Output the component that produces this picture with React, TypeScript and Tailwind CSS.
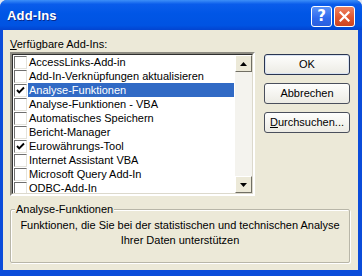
import React from "react";

const items = [
  { label: "AccessLinks-Add-in", checked: false },
  { label: "Add-In-Verknüpfungen aktualisieren", checked: false },
  { label: "Analyse-Funktionen", checked: true, selected: true },
  { label: "Analyse-Funktionen - VBA", checked: false },
  { label: "Automatisches Speichern", checked: false },
  { label: "Bericht-Manager", checked: false },
  { label: "Eurowährungs-Tool", checked: true },
  { label: "Internet Assistant VBA", checked: false },
  { label: "Microsoft Query Add-In", checked: false },
  { label: "ODBC-Add-In", checked: false },
];

function CheckBox({ checked }: { checked: boolean }) {
  return (
    <div className="w-[13px] h-[13px] shrink-0 bg-white border-t border-l border-[#6f6f6f] border-r-[#e4e3dc] border-b-[#e4e3dc] border-r border-b flex items-center justify-center">
      {checked && (
        <svg width="9" height="9" viewBox="0 0 9 9">
          <polyline points="1,4 3.2,6.3 8,1.5" fill="none" stroke="#000" strokeWidth="1.9" />
        </svg>
      )}
    </div>
  );
}

function ScrollBtn({ up }: { up: boolean }) {
  return (
    <div className="h-[17px] w-[17px] bg-[#ECE9D8] border border-t-white border-l-white border-r-[#716F64] border-b-[#716F64] flex items-center justify-center">
      <svg width="7" height="4" viewBox="0 0 7 4">
        {up ? <polygon points="0,4 7,4 3.5,0" fill="#000" /> : <polygon points="0,0 7,0 3.5,4" fill="#000" />}
      </svg>
    </div>
  );
}

function Btn({ children, def }: { children: React.ReactNode; def?: boolean }) {
  return (
    <div
      className={
        "h-[21px] w-[86px] rounded-[3px] border flex items-center justify-center bg-gradient-to-b from-[#FEFEFD] to-[#ECEBE4] text-black " +
        (def ? "border-[#2a3550] shadow-[inset_0_0_0_1px_#d8e2f2]" : "border-[#4a4f5c]")
      }
    >
      {children}
    </div>
  );
}

export default function App() {
  return (
    <div className="w-[362px] h-[276px] bg-[#dfe6f3] font-['Liberation_Sans',Arial,sans-serif] text-[11px] text-black overflow-hidden">
      <div className="w-[362px] h-[276px] flex flex-col rounded-t-[7px] bg-[#0B4CDA] overflow-hidden">
        {/* Title bar */}
        <div className="h-[30px] shrink-0 flex items-center pl-[7px] pr-[7px] bg-[linear-gradient(to_bottom,#3D8FF8_0%,#0A5CEB_14%,#0056E6_45%,#0053E2_85%,#0344D0_100%)]">
          <span className="text-white font-bold text-[13px] tracking-[0.2px] [text-shadow:1px_1px_0_#0a2a8a] mt-[2px]">Add-Ins</span>
          <div className="flex-1" />
          <div className="flex gap-[2px] mt-[2px]">
            <div className="w-[21px] h-[21px] rounded-[3px] border border-white bg-[linear-gradient(to_bottom,#5A92F8,#2D68EE_60%,#2A5FDD)] flex items-center justify-center">
              <span className="text-white font-bold text-[15px] leading-none font-['DejaVu_Sans',sans-serif]">?</span>
            </div>
            <div className="w-[21px] h-[21px] rounded-[3px] border border-white bg-[linear-gradient(to_bottom,#EE8463,#E0562F_55%,#CC4421)] flex items-center justify-center">
              <svg width="11" height="11" viewBox="0 0 11 11">
                <path d="M1.5 1.5 L9.5 9.5 M9.5 1.5 L1.5 9.5" stroke="#fff" strokeWidth="2.2" strokeLinecap="square" />
              </svg>
            </div>
          </div>
        </div>

        {/* Body */}
        <div className="flex-1 ml-[3px] mr-[4px] mb-[6px] bg-[#ECE9D8] flex flex-col pt-[7px] pl-[7px] pr-[8px] pb-[7px]">
          <div className="flex gap-[9px]">
            <div className="flex flex-col w-[246px]">
              <div className="h-[15px] leading-[15px]">
                <span className="underline">V</span>erfügbare Add-Ins:
              </div>
              <div className="h-[144px] border-2 border-t-[#8d8b82] border-l-[#8d8b82] border-r-white border-b-white">
                <div className="h-full border border-t-[#2e2e2e] border-l-[#2e2e2e] border-r-[#dcd9cc] border-b-[#dcd9cc] bg-white flex overflow-hidden">
                  <div className="flex-1 flex flex-col">
                    {items.map((it) => (
                      <div key={it.label} className="h-[14px] flex items-center pl-[1px]">
                        <CheckBox checked={it.checked} />
                        <div
                          className={
                            "ml-[1px] h-[14px] flex-1 leading-[14px] pl-[1px] whitespace-nowrap " +
                            (it.selected ? "bg-[#316AC5] text-white" : "")
                          }
                        >
                          {it.label}
                        </div>
                      </div>
                    ))}
                  </div>
                  <div className="w-[17px] flex flex-col bg-[#F4F3EE] ml-[1px]">
                    <ScrollBtn up />
                    <div className="flex-1" />
                    <ScrollBtn up={false} />
                  </div>
                </div>
              </div>
            </div>
            <div className="flex flex-col pt-[17px] gap-[8px]">
              <Btn def>OK</Btn>
              <Btn>Abbrechen</Btn>
              <Btn>
                <span>
                  <span className="underline">D</span>urchsuchen...
                </span>
              </Btn>
            </div>
          </div>

          <div className="mt-[13px] flex-1 border border-[#B8B6A8] rounded-[2px] shadow-[inset_1px_1px_0_#fff,1px_1px_0_#fff] relative flex flex-col items-center pt-[8px]">
            <span className="absolute -top-[8px] left-[4px] bg-[#ECE9D8] px-[1px] leading-[15px]">Analyse-Funktionen</span>
            <div className="text-center leading-[15px]">
              Funktionen, die Sie bei der statistischen und technischen Analyse
              <br />
              Ihrer Daten unterstützen
            </div>
          </div>
        </div>
      </div>
    </div>
  );
}
